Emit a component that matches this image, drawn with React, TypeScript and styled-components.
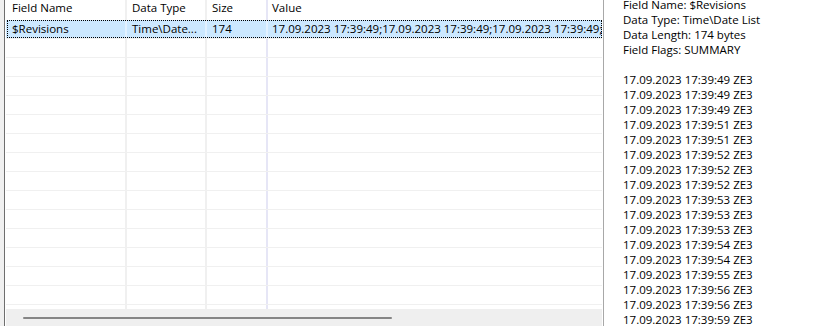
import styled, { createGlobalStyle } from 'styled-components';

const GlobalStyle = createGlobalStyle`
  html, body {
    margin: 0;
    padding: 0;
    background: #ffffff;
  }
  body {
    font-family: 'Open Sans', 'Noto Sans', 'Liberation Sans', sans-serif;
    font-size: 11.5px;
    color: #000000;
  }
`;

const Window = styled.div`
  display: flex;
  width: 821px;
  height: 326px;
  overflow: hidden;
  background: #ffffff;
`;

const Gutter = styled.div`
  width: 4px;
  flex: none;
  background: #f0f0f0;
  border-right: 1px solid #6e6e6e;
`;

const Grid = styled.div`
  width: 596px;
  flex: none;
  display: flex;
  flex-direction: column;
  padding: 0 1px;
  border-right: 1px solid #a8a8a8;
`;

const Body = styled.div`
  flex: 1;
  overflow: hidden;
`;

const Row = styled.div<{ $header?: boolean; $selected?: boolean }>`
  position: relative;
  display: grid;
  grid-template-columns: 121px 80px 61px 1fr;
  height: ${(p) => (p.$header ? '20px' : '19px')};
  line-height: ${(p) => (p.$header ? '15px' : '18px')};
  box-sizing: border-box;
  border-bottom: ${(p) => (p.$header ? 'none' : '1px solid #f0f0f0')};
  background: ${(p) => (p.$selected ? '#cce8ff' : 'transparent')};

  ${(p) =>
    p.$selected &&
    `
    &::after {
      content: '';
      position: absolute;
      inset: 0 0 0 1px;
      border: 1px dotted #000000;
      pointer-events: none;
    }
  `}
`;

const Cell = styled.div<{ $sep?: 'plain' | 'blue' | 'none'; $selected?: boolean }>`
  padding-left: 5px;
  white-space: nowrap;
  overflow: hidden;
  height: 100%;
  margin-bottom: -1px;
  border-right: 2px solid
    ${(p) =>
      p.$sep === 'none'
        ? 'transparent'
        : p.$selected
          ? '#e2f1ff'
          : p.$sep === 'blue'
            ? '#e6e6f6'
            : '#f0f0f0'};
  border-right-width: ${(p) => (p.$sep === 'none' ? '0' : '2px')};

  &:first-child {
    padding-left: 6px;
  }
  &:last-child {
    padding-left: 4px;
  }
`;

const Scrollbar = styled.div`
  height: 17px;
  flex: none;
  background: #efefef;
  padding: 8px 0 0 17px;
  box-sizing: border-box;
`;

const Thumb = styled.div`
  width: 369px;
  height: 2px;
  border-radius: 1px;
  background: #858585;
`;

const Details = styled.div`
  flex: 1;
  padding-left: 19px;
  background: #ffffff;
  overflow: hidden;
`;

const DetailLines = styled.div`
  margin-top: -3px;
  line-height: 15px;
  white-space: nowrap;
`;

const Line = styled.div`
  height: 15px;
`;

const columns = ['Field Name', 'Data Type', 'Size', 'Value'];
const seps: Array<'plain' | 'blue' | 'none'> = ['plain', 'plain', 'blue', 'none'];

const stamp = '17.09.2023 17:39:49;';
const fields = [
  {
    name: '$Revisions',
    type: 'Time\\Date...',
    size: '174',
    value: stamp + stamp + stamp + stamp,
  },
];

const seconds = ['49', '49', '49', '51', '51', '52', '52', '52', '53', '53', '53', '54', '54', '55', '56', '56', '59'];

export default function App() {
  const empty = Array.from({ length: 15 }, (_, i) => i);

  return (
    <>
      <GlobalStyle />
      <Window>
        <Gutter />
        <Grid>
          <Row $header>
            {columns.map((c, i) => (
              <Cell key={c} $sep={seps[i]}>
                {c}
              </Cell>
            ))}
          </Row>
          <Body>
            {fields.map((f) => (
              <Row key={f.name} $selected>
                <Cell $sep="plain" $selected>{f.name}</Cell>
                <Cell $sep="plain" $selected>{f.type}</Cell>
                <Cell $sep="blue" $selected>{f.size}</Cell>
                <Cell $sep="none">{f.value}</Cell>
              </Row>
            ))}
            {empty.map((i) => (
              <Row key={i}>
                {seps.map((s, j) => (
                  <Cell key={j} $sep={s} />
                ))}
              </Row>
            ))}
          </Body>
          <Scrollbar>
            <Thumb />
          </Scrollbar>
        </Grid>
        <Details>
          <DetailLines>
            <Line>Field Name: $Revisions</Line>
            <Line>Data Type: Time\Date List</Line>
            <Line>Data Length: 174 bytes</Line>
            <Line>Field Flags: SUMMARY</Line>
            <Line />
            {seconds.map((s, i) => (
              <Line key={i}>17.09.2023 17:39:{s} ZE3</Line>
            ))}
          </DetailLines>
        </Details>
      </Window>
    </>
  );
}
